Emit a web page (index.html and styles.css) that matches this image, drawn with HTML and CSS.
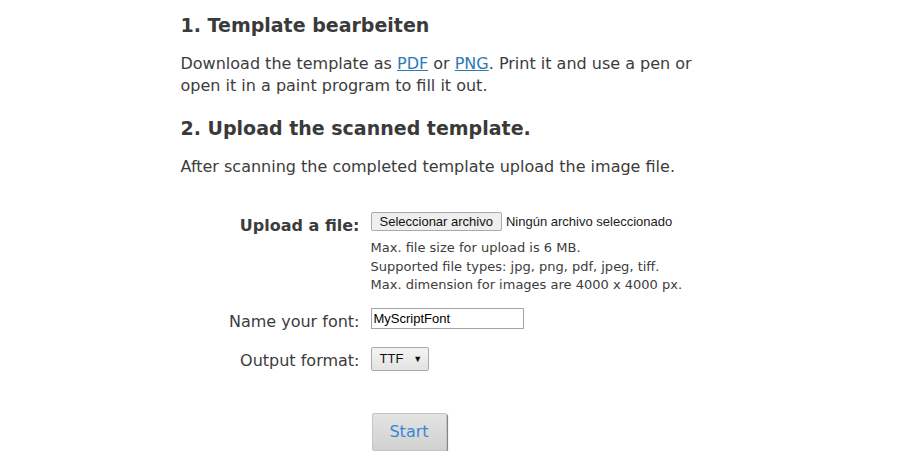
FILE: index.html
```html
<!DOCTYPE html>
<html lang="en">
<head>
    <meta charset="UTF-8">
    <title>Template upload</title>
    <link rel="stylesheet" href="styles.css">
</head>
<body>
    <div class="container">
        <h2>1. Template bearbeiten</h2>
        <p>Download the template as <a href="#">PDF</a> or <a href="#">PNG</a>. Print it and use a pen or open it in a paint program to fill it out.</p>

        <h2>2. Upload the scanned template.</h2>
        <p>After scanning the completed template upload the image file.</p>

        <!-- Upload form -->
        <form class="upload-form">
            <label class="form-label strong">Upload a file:</label>
            <div class="form-field">
                <div class="file-row">
                    <button type="button" class="file-btn">Seleccionar archivo</button>
                    <span class="file-name">Ningún archivo seleccionado</span>
                </div>
                <div class="hint">
                    Max. file size for upload is 6 MB.<br>
                    Supported file types: jpg, png, pdf, jpeg, tiff.<br>
                    Max. dimension for images are 4000 x 4000 px.
                </div>
            </div>

            <label class="form-label">Name your font:</label>
            <div class="form-field">
                <input type="text" class="text-input" value="MyScriptFont">
            </div>

            <label class="form-label">Output format:</label>
            <div class="form-field">
                <div class="select-box">TTF <span class="arrow">&#9660;</span></div>
            </div>

            <div></div>
            <div class="form-field submit-row">
                <button type="button" class="start-btn">Start</button>
            </div>
        </form>
    </div>
</body>
</html>
```

FILE: styles.css
```css
/* General Styles */
body {
    font-family: "DejaVu Sans", Verdana, sans-serif;
    background-color: #fff;
    color: #3c3c3c;
    margin: 0;
    padding: 0;
}

.container {
    width: 540px;
    margin: 0 auto;
    padding-top: 13px;
}

h2 {
    font-size: 19px;
    font-weight: bold;
    color: #3a3a3a;
    margin: 0 0 16px;
    line-height: 24px;
}

p {
    font-size: 16px;
    line-height: 22px;
    margin: 0 0 19px;
}

a {
    color: #2a7ab8;
}

/* Form */
.upload-form {
    display: grid;
    grid-template-columns: 179px 1fr;
    column-gap: 11px;
    row-gap: 0;
    margin-top: 34px;
}

.form-label {
    text-align: right;
    font-size: 16px;
    line-height: 20px;
    padding-top: 4px;
}

.form-label.strong {
    font-weight: bold;
}

.form-field {
    font-size: 13px;
}

.file-row {
    display: flex;
    align-items: center;
    gap: 4px;
    font-family: "Liberation Sans", Arial, sans-serif;
}

.file-btn {
    font-family: "Liberation Sans", Arial, sans-serif;
    font-size: 13px;
    height: 19px;
    padding: 0 8px;
    background: #efefef;
    border: 1px solid #a9a9a9;
    border-radius: 2px;
    color: #111;
}

.file-name {
    font-size: 13px;
    color: #222;
}

.hint {
    margin-top: 8px;
    line-height: 18.5px;
    color: #3c3c3c;
    margin-bottom: 13px;
}

.text-input {
    font-family: "Liberation Sans", Arial, sans-serif;
    font-size: 13px;
    width: 153px;
    height: 21px;
    box-sizing: border-box;
    border: 1px solid #a5a5a5;
    padding: 1px 2px;
    color: #000;
    margin-bottom: 18px;
}

.select-box {
    display: inline-flex;
    align-items: center;
    box-sizing: border-box;
    width: 58px;
    height: 24px;
    padding: 0 6px 0 8px;
    gap: 10px;
    font-family: "Liberation Sans", Arial, sans-serif;
    font-size: 13px;
    color: #111;
    background: linear-gradient(#f4f4f4, #e2e2e2);
    border: 1px solid #a9a9a9;
    border-radius: 2px;
}

.arrow {
    font-size: 9px;
}

.submit-row {
    padding-top: 42px;
}

.start-btn {
    font-family: "DejaVu Sans", Verdana, sans-serif;
    font-size: 16px;
    width: 75px;
    height: 38px;
    color: #3a86d4;
    background: linear-gradient(#e4e4e4, #d0d0d0);
    border: 1px solid #c4c4c4;
    border-radius: 2px;
    box-shadow: 1px 1px 1px #777;
    margin-left: 1px;
    cursor: pointer;
}
```
